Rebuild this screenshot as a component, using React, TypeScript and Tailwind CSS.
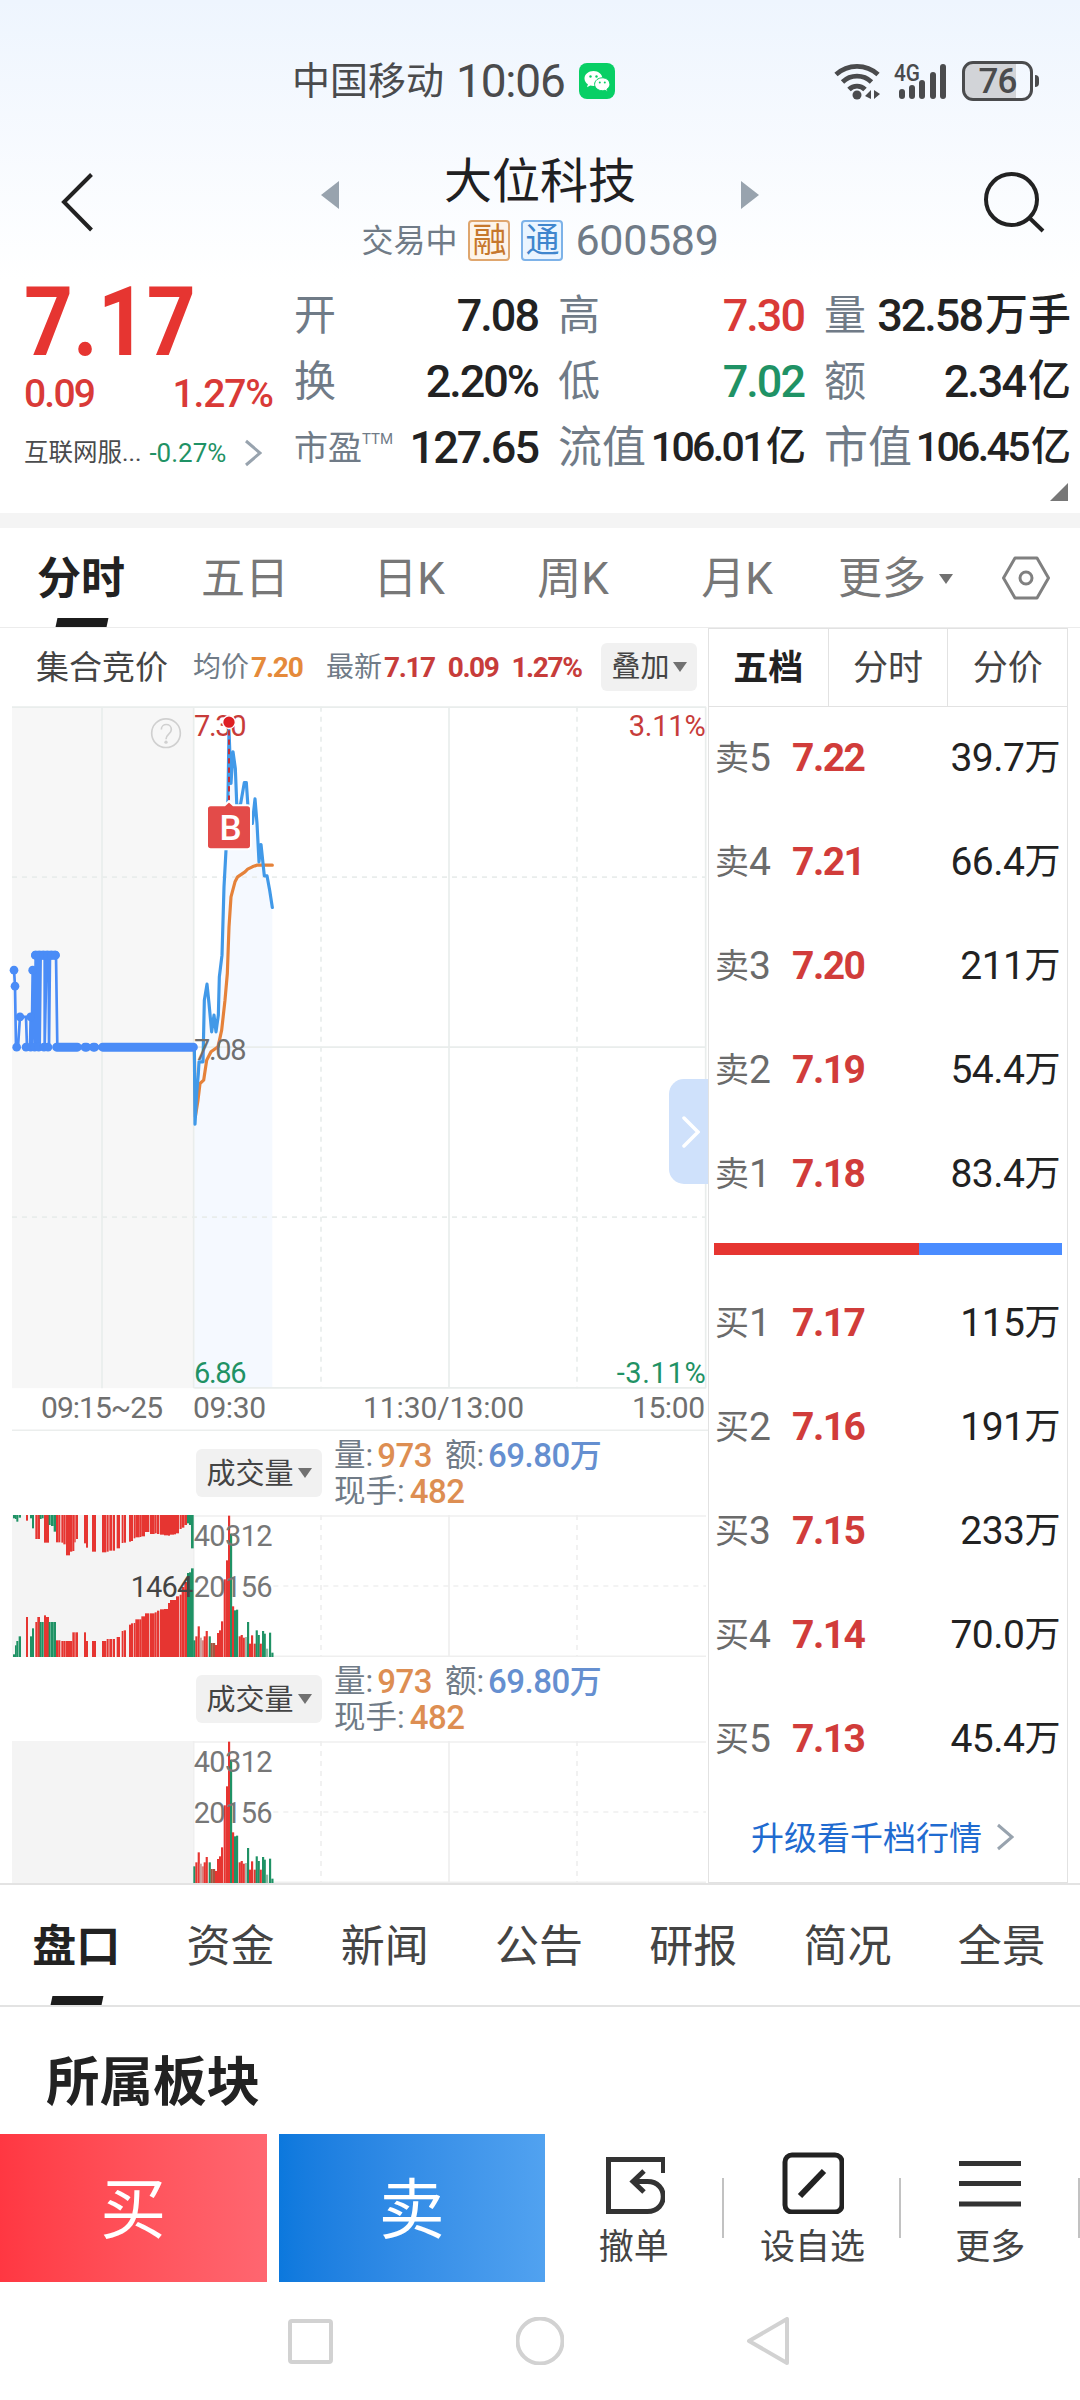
import type { ReactNode } from 'react';
import clsx from 'clsx';

const RED = '#e63531';
const GREEN = '#1f9265';

interface Quote {
  label: ReactNode;
  value: string;
  unit?: string;
  tone?: string;
  compact?: boolean;
}

const quotes: Quote[] = [
  { label: '开', value: '7.08' },
  { label: '高', value: '7.30', tone: 'text-[#d93a37]' },
  { label: '量', value: '32.58', unit: '万手' },
  { label: '换', value: '2.20%' },
  { label: '低', value: '7.02', tone: 'text-[#1f9265]' },
  { label: '额', value: '2.34', unit: '亿' },
  {
    label: (
      <span className="flex items-start text-[34px] leading-[38px]">
        市盈<span className="text-[15px] leading-[20px]">TTM</span>
      </span>
    ),
    value: '127.65',
  },
  { label: '流值', value: '106.01', unit: '亿', compact: true },
  { label: '市值', value: '106.45', unit: '亿', compact: true },
];

const sells = [
  ['卖', '5', '7.22', '39.7'],
  ['卖', '4', '7.21', '66.4'],
  ['卖', '3', '7.20', '211'],
  ['卖', '2', '7.19', '54.4'],
  ['卖', '1', '7.18', '83.4'],
];

const buys = [
  ['买', '1', '7.17', '115'],
  ['买', '2', '7.16', '191'],
  ['买', '3', '7.15', '233'],
  ['买', '4', '7.14', '70.0'],
  ['买', '5', '7.13', '45.4'],
];

// Chart units are a third of a pixel.
const PRICE_LINE =
  '583,1041 585,1272 590,1180 595,1120 597,1085 609,1085 613,900 621,852 627,910 635,995 642,945 648,995 655,945 658,830 666,765 672,560 678,450 684,290 687,90 693,250 699,155 706,205 711,330 722,310 733,247 739,247 744,320 757,370 765,296 771,370 777,485 783,433 793,527 801,527 809,570 817,622';
const AVG_LINE =
  '583,1041 586,1250 594,1200 600,1150 611,1140 620,1080 633,1055 654,1040 665,990 675,900 682,820 687,680 693,590 705,545 713,530 735,515 743,507 757,500 770,495 817,495';
const AUCTION_LINE =
  '42,808 45,858 48,1041 54,1041 60,950 78,950 81,1041 90,1041 92,950 95,1041 98,810 104,1041 107,765 111,1041 115,765 119,1041 122,765 134,765 134,1041 140,765 146,765 147,1041 150,765 168,765 172,1041 583,1041';
const AUCTION_DOTS = [
  [42, 810], [45, 858], [60, 950], [92, 950], [98, 810], [106, 765], [118, 765], [130, 765],
  [142, 765], [154, 765], [166, 765], [50, 1041], [78, 1041], [92, 1041], [104, 1041],
  [116, 1041], [132, 1041], [144, 1041],
];

type Bar = [x: number, height: number, color: string];

const tradeBars: Bar[] = [
  [583, 50, GREEN], [589, 62, RED], [596, 92, RED], [602, 58, '#c9a2a0'], [608, 50, '#d98480'],
  [614, 62, RED], [620, 78, RED], [629, 62, GREEN], [635, 42, '#a4553f'], [642, 42, '#a4553f'],
  [648, 36, RED], [654, 72, RED], [660, 80, RED], [666, 107, RED], [674, 233, RED],
  [681, 290, RED], [687, 424, RED], [693, 370, GREEN], [699, 152, RED], [705, 140, GREEN],
  [711, 142, GREEN], [719, 62, RED], [725, 66, RED], [731, 58, RED], [738, 60, '#a9b9ae'],
  [744, 105, GREEN], [750, 40, RED], [756, 65, RED], [764, 40, RED], [770, 80, GREEN],
  [776, 66, GREEN], [782, 40, RED], [789, 78, GREEN], [794, 70, GREEN], [801, 25, '#8fb8a2'],
  [810, 73, GREEN], [817, 13, GREEN],
];

// x, width, depth from the top, height from the bottom, colour
type AuctionBar = [number, number, number, number, string];

const auctionBars: AuctionBar[] = [
  [39, 6, 10, 8, GREEN], [45, 5, 12, 35, GREEN], [49, 6, 20, 48, GREEN], [56, 7, 8, 62, GREEN],
  [78, 6, 17, 120, RED], [90, 6, 10, 62, GREEN], [96, 6, 40, 86, GREEN], [106, 6, 72, 105, RED],
  [112, 8, 72, 120, RED], [119, 6, 12, 105, GREEN], [125, 6, 10, 105, GREEN], [132, 6, 83, 125, RED],
  [138, 9, 83, 120, RED], [146, 6, 30, 105, GREEN], [153, 8, 33, 105, GREEN], [161, 7, 50, 105, GREEN],
  [168, 7, 82, 50, RED], [175, 6, 82, 50, RED], [184, 6, 83, 48, RED], [190, 7, 88, 48, RED],
  [198, 12, 121, 48, RED], [210, 7, 110, 48, RED], [217, 6, 108, 74, RED], [223, 4, 82, 74, RED],
  [228, 6, 72, 74, RED], [252, 6, 85, 74, RED], [258, 6, 98, 48, RED], [276, 12, 110, 48, RED],
  [306, 13, 112, 48, RED], [320, 6, 110, 54, RED], [328, 8, 107, 54, RED], [338, 7, 107, 54, RED],
  [350, 10, 100, 60, RED], [365, 5, 84, 78, RED], [371, 7, 83, 80, RED], [387, 6, 80, 97, RED],
  [393, 6, 78, 101, RED], [401, 5, 70, 102, RED], [406, 13, 67, 113, RED], [419, 5, 66, 113, RED],
  [424, 11, 64, 122, RED], [435, 13, 51, 131, RED], [450, 14, 57, 131, RED], [464, 6, 55, 134, RED],
  [471, 7, 57, 139, RED], [480, 12, 59, 143, RED], [492, 12, 61, 144, RED], [504, 6, 62, 162, RED],
  [510, 12, 59, 171, RED], [522, 6, 58, 171, RED], [528, 9, 55, 182, RED], [539, 6, 42, 187, RED],
  [545, 8, 38, 210, RED], [553, 8, 30, 225, RED], [561, 6, 25, 252, GREEN], [567, 6, 30, 254, GREEN],
  [573, 8, 100, 266, GREEN],
];

function Caret({ className }: { className?: string }) {
  return (
    <svg viewBox="0 0 14 10" className={clsx('h-[10px] w-[14px] shrink-0', className)}>
      <path d="M0 0h14L7 10z" fill="#717171" />
    </svg>
  );
}

function ChevronRight({ className }: { className?: string }) {
  return (
    <svg viewBox="0 0 18 28" fill="none" strokeWidth={3} className={clsx('h-7 w-[18px] shrink-0', className)}>
      <path d="M2 2l14 12L2 26" stroke="currentColor" />
    </svg>
  );
}

function StatusBar() {
  return (
    <div className="flex h-[110px] items-center pt-[52px] pr-[41px] pl-[292px] text-[#4a4b4d]">
      <span className="text-[38px] leading-none">中国移动</span>
      <span className="ml-[12px] text-[46px] leading-none tracking-[-1.2px]">10:06</span>
      <svg viewBox="0 0 36 36" className="ml-[14px] h-9 w-9">
        <rect width="36" height="36" rx="8" fill="#08cf65" />
        <g fill="#fff">
          <path d="M14.500 8c-5 0-9 3.300-9 7.500 0 2.400 1.300 4.400 3.400 5.800l-.9 2.900 3.300-1.700c1 .3 2 .4 3.200.4 4.900 0 8.900-3.200 8.900-7.400S19.400 8 14.500 8z" />
          <path
            d="M23.300 14.800c-4.200 0-7.700 2.900-7.700 6.500s3.500 6.400 7.700 6.400c.9 0 1.800-.1 2.600-.4l2.700 1.500-.7-2.500c1.800-1.200 3-2.900 3-5 0-3.600-3.400-6.500-7.600-6.500z"
            stroke="#08cf65"
          />
        </g>
        <g fill="#08cf65">
          <circle cx="11.500" cy="13.500" r="1.200" />
          <circle cx="17.500" cy="13.500" r="1.200" />
          <circle cx="20.800" cy="19.500" r="1" />
          <circle cx="25.800" cy="19.500" r="1" />
        </g>
      </svg>
      <svg viewBox="0 0 48 38" fill="none" stroke="#4a4b4d" strokeWidth={4.800} className="ml-auto h-[38px] w-12">
        <path d="M2 12.500a31 31 0 0 1 42 0M8.500 20a21 21 0 0 1 29 0M15 27.500a11 11 0 0 1 16 0" />
        <circle cx="23" cy="33" r="4.500" fill="#4a4b4d" stroke="none" />
        <path d="M37 28v9l-6-3zM40 28v9l6-5z" fill="#4a4b4d" stroke="none" />
      </svg>
      <svg viewBox="0 0 54 38" className="ml-[12px] h-[38px] w-[54px] overflow-visible" fill="#4a4b4d">
        <text x="0" y="19" fontSize="24" fontWeight="500" textLength="26" lengthAdjust="spacingAndGlyphs">
          4G
        </text>
        <rect x="5" y="27" width="6" height="10" rx="3" />
        <rect x="15" y="23" width="6" height="14" rx="3" />
        <rect x="25" y="18" width="6" height="19" rx="3" />
        <rect x="36" y="10" width="6" height="27" rx="3" />
        <rect x="46" y="2" width="6" height="35" rx="3" />
      </svg>
      <div className="ml-[14px] flex h-10 w-[71px] items-center justify-center rounded-[11px] border-3 border-[#4a4b4d] bg-linear-to-r from-[#d2d4d8] from-78% to-transparent to-78% text-[35px] leading-none font-medium tracking-[-1px]">
        76
      </div>
      <div className="ml-[2px] h-3 w-1 rounded-r-full bg-[#4a4b4d]" />
    </div>
  );
}

function TitleBar() {
  return (
    <div className="flex h-[170px] items-center">
      <div className="w-[321px] pl-[60px]">
        <svg viewBox="0 0 34 60" fill="none" className="mt-[14px] h-[60px] w-[34px]">
          <path d="M31.500 2.500L4 30l27.500 28" stroke="#222" strokeWidth="4" />
        </svg>
      </div>
      <svg viewBox="0 0 18 28" className="h-7 w-[18px]">
        <path d="M18 0v28L0 14z" fill="#98a3ae" />
      </svg>
      <div className="flex flex-1 flex-col items-center self-start pt-[48px]">
        <h1 className="text-[48px] leading-[48px] text-[#1f2022]">大位科技</h1>
        <div className="mt-[14px] flex h-10 items-center text-[32px] leading-none whitespace-nowrap text-[#707b87]">
          <span className="pt-[2px]">交易中</span>
          <span className="ml-[11px] flex h-[41px] w-[42px] items-center justify-center rounded-[4px] border-2 border-[#dfa66e] bg-[#fdf4ea] text-[34px] text-[#c6772c]">
            融
          </span>
          <span className="ml-[11px] flex h-[41px] w-[42px] items-center justify-center rounded-[4px] border-2 border-[#7db2e8] bg-[#eaf5ff] text-[34px] text-[#3f86cd]">
            通
          </span>
          <span className="ml-[12px] text-[43px] tracking-[-0.3px]">600589</span>
        </div>
      </div>
      <svg viewBox="0 0 18 28" className="h-7 w-[18px]">
        <path d="M0 0v28l18-14z" fill="#98a3ae" />
      </svg>
      <div className="flex w-[321px] justify-end pr-[33px]">
        <svg viewBox="0 0 64 62" fill="none" stroke="#222" strokeWidth="4" className="mt-[14px] h-[62px] w-16">
          <circle cx="28.500" cy="28.500" r="25.500" />
          <path d="M46 46.500l14 13.500" />
        </svg>
      </div>
    </div>
  );
}

function QuotePanel() {
  return (
    <div className="relative flex h-[233px] pt-[2px]">
      <div className="w-[294px] pl-6 text-[#d93a37]">
        <div className="origin-left scale-x-[0.89] pt-[3px] text-[96px] leading-[75px] font-bold text-[#e63531]">7.17</div>
        <div className="mt-[15px] flex w-[248px] justify-between text-[39px] leading-[38px] font-medium">
          <span className="tracking-[-1.8px]">0.09</span>
          <span className="-mr-[1px] tracking-[-1.100px]">1.27%</span>
        </div>
        <div className="mt-[26px] flex items-center leading-[28px] whitespace-nowrap">
          <span className="text-[24.500px] text-[#4a4b4d]">互联网服...</span>
          <span className="ml-[8px] text-[26px] text-[#1f9265]">-0.27%</span>
          <ChevronRight className="ml-[18px] text-[#98a3ae]" />
        </div>
      </div>
      <div className="grid h-[198px] grid-cols-[244px_246px_245px] grid-rows-3 gap-x-5 font-medium text-[#222]">
        {quotes.map((q, i) => (
          <div key={i} className="flex items-center justify-between leading-none whitespace-nowrap">
            <span className={clsx('pt-[2px] font-normal text-[#707b87]', q.compact ? 'text-[44px]' : 'text-[42px]')}>
              {q.label}
            </span>
            <span
              className={clsx(
                'flex items-center',
                q.tone,
                q.compact ? 'text-[41px] tracking-[-2.600px]' : 'text-[45px] tracking-[-2px]',
              )}
            >
              {q.value}
              {q.unit && (
                <span className={clsx('-mr-[2px] ml-[3px] tracking-normal', q.compact ? 'text-[40px]' : 'text-[43px]')}>
                  {q.unit}
                </span>
              )}
            </span>
          </div>
        ))}
      </div>
      <svg viewBox="0 0 18 18" className="absolute right-[12px] bottom-[12px] h-[18px] w-[18px]">
        <path d="M18 0v18H0z" fill="#777" />
      </svg>
    </div>
  );
}

function Underline() {
  return <span className="absolute bottom-0 left-1/2 h-[9px] w-[51px] -translate-x-1/2 -skew-x-12 bg-[#1c1c1c]" />;
}

function PeriodTabs() {
  return (
    <div className="flex h-[100px] items-center border-b border-[#ececec] text-[44px] leading-none text-[#777]">
      {['分时', '五日', '日K', '周K', '月K'].map((tab, i) => (
        <div
          key={tab}
          className={clsx('relative flex h-full w-[164px] items-center justify-center', i === 0 && 'font-bold text-[#222]')}
        >
          <span className="-ml-[2px] pt-[3px]">{tab}</span>
          {i === 0 && <Underline />}
        </div>
      ))}
      <div className="flex w-[182px] items-center pt-[2px] pl-[18px]">
        更多
        <Caret className="ml-[13px]" />
      </div>
      <svg viewBox="0 0 48 44" fill="none" stroke="#808080" strokeWidth="3" className="h-11 w-12">
        <path d="M13 2h22l11.500 20L35 42H13L1.500 22z" strokeLinejoin="round" />
        <circle cx="24" cy="22" r="6" />
      </svg>
    </div>
  );
}

function InfoRow() {
  return (
    <div className="flex h-[78px] items-center text-[28px] leading-none whitespace-nowrap text-[#707b87]">
      <span className="ml-9 w-[157px] text-[33px] text-[#444]">集合竞价</span>
      <span className="w-[133px] pt-[2px]">
        均价<b className="ml-[2px] tracking-[-1.200px] text-[#e58a3a]">7.20</b>
      </span>
      <span className="flex items-center pt-[2px]">
        最新
        <b className="ml-[2px] flex gap-[13px] tracking-[-1.400px] text-[#c73c3a]">
          <span>7.17</span>
          <span>0.09</span>
          <span>1.27%</span>
        </b>
      </span>
      <span className="mr-[11px] ml-auto flex h-12 w-24 items-center justify-center gap-[3px] rounded-[6px] bg-[#f1f1f1] text-[29px] text-[#444]">
        叠加
        <Caret />
      </span>
    </div>
  );
}

function PriceChart() {
  return (
    <div className="relative">
      <svg viewBox="0 18 2124 2048" className="block h-[683px] w-[708px]">
        <rect x="36" y="20" width="545" height="2044" fill="#f7f7f7" />
        <polygon points={`583,2064 ${PRICE_LINE} 817,2064`} fill="#f5f9ff" />
        <g stroke="#e9edec" strokeWidth="5">
          <path d="M36 21H2118M583 1041H2118M583 2063H2118M306 20V2064M581 20V2064M1347 20V2064M2117 20V2064" fill="none" />
          <path d="M36 531H2118M36 1551H2118M963 20V2064M1731 20V2064" strokeDasharray="15 15" fill="none" />
        </g>
        <g fill="none" stroke="#d0d0d0" strokeWidth="5">
          <circle cx="498" cy="99" r="43" />
          <path d="M484 88c0-20 30-20 30 0 0 14-16 14-16 29" />
        </g>
        <circle cx="498" cy="126" r="5" fill="#d0d0d0" />
        <g fontSize="87" fill="#6f6f6f">
          <text x="582" y="107" textLength="158" fill="#c73c3a">7.30</text>
          <text x="1886" y="107" textLength="231" fill="#c73c3a">3.11%</text>
          <text x="582" y="2050" textLength="158" fill={GREEN}>6.86</text>
          <text x="1850" y="2050" textLength="267" fill={GREEN}>-3.11%</text>
        </g>
        <g fill="none" strokeWidth="9.500" strokeLinejoin="round" strokeLinecap="round">
          <polyline points={AVG_LINE} stroke="#e5823a" />
          <polyline points={PRICE_LINE} stroke="#4199e8" />
        </g>
        <polyline points={AUCTION_LINE} fill="none" stroke="#4a8cf7" strokeWidth="8" />
        <path
          d="M107 765H166M170 1041H232M255 1041H260M280 1041H284M308 1041H580"
          stroke="#4a8cf7"
          strokeWidth="27"
          strokeLinecap="round"
        />
        {AUCTION_DOTS.map(([x, y], i) => (
          <circle key={i} cx={x} cy={y} r="13" fill="#4a8cf7" />
        ))}
        <text x="582" y="1080" fontSize="87" textLength="158" fill="#6f6f6f">7.08</text>
        <path d="M687 90V300" stroke="#c2303a" strokeWidth="6" strokeDasharray="16 12" />
        <circle cx="687" cy="66" r="19" fill="#de1f23" stroke="#fff" strokeWidth="4" />
        <path d="M632 315h42l13-12 13 12h42q11 0 11 11v110q0 11-11 11H632q-11 0-11-11V326q0-11 11-11z" fill="#e34b49" stroke="#fff" strokeWidth="6" />
        <text x="692" y="419" fontSize="105" fontWeight="500" textAnchor="middle" fill="#fff">B</text>
      </svg>
      <div className="absolute top-[373px] right-0 flex h-[105px] w-[39px] items-center justify-center rounded-l-[15px] bg-[#cfe1fb]">
        <svg viewBox="0 0 18 32" fill="none" className="ml-[4px] h-8 w-[18px]">
          <path d="M2 2l14 14L2 30" stroke="#fff" strokeWidth="3.500" strokeLinecap="round" />
        </svg>
      </div>
    </div>
  );
}

function TimeAxis() {
  return (
    <svg viewBox="0 0 708 42" fontSize="30" fill="#6f6f6f" className="block h-[42px] w-[708px]">
      <text x="41" y="29" textLength="122">09:15~25</text>
      <text x="193" y="29" textLength="73">09:30</text>
      <text x="363" y="29" textLength="161">11:30/13:00</text>
      <text x="632" y="29" textLength="73">15:00</text>
      <path d="M12 41.500H708" stroke="#ebeeed" strokeWidth="2" />
    </svg>
  );
}

function VolumeHeader() {
  return (
    <div className="flex h-[84px] items-center pl-[196px] leading-none">
      <div className="flex h-12 w-[126px] items-center justify-center gap-[4px] rounded-[6px] bg-[#f1f1f1] text-[29px] text-[#444]">
        <span className="pt-[2px]">成交量</span>
        <Caret />
      </div>
      <div className="ml-[12px] pt-[2px] text-[31.500px] leading-9 font-medium whitespace-nowrap text-[#707b87]">
        <div className="flex">
          <span className="font-normal">量:</span>
          <span className="ml-[4px] text-[33px] tracking-[-0.500px] text-[#dd8e52]">973</span>
          <span className="ml-[13px] font-normal">额:</span>
          <span className="ml-[4px] flex text-[33px] tracking-[-0.500px] text-[#658fd0]">
            69.80<span className="text-[32px]">万</span>
          </span>
        </div>
        <div className="flex">
          <span className="font-normal">现手:</span>
          <span className="ml-[5px] text-[33px] tracking-[-0.500px] text-[#dd8e52]">482</span>
        </div>
      </div>
    </div>
  );
}

function VolumeChart({ auction }: { auction?: boolean }) {
  return (
    <svg viewBox="0 345 2124 426" className="block h-[142px] w-[708px]" fontSize="87" fill="#777">
      <rect x="36" y="345" width="545" height="426" fill="#f4f4f4" />
      <g stroke="#efefef" strokeWidth="5" fill="none">
        <path d="M580 348H2118M580 769H2118M581 345V770M1347 345V770" />
        <path d="M820 558H2118M963 345V770M1731 345V770" strokeDasharray="15 15" />
      </g>
      {auction &&
        auctionBars.map(([x, w, top, bottom, color]) => (
          <g key={x} fill={color}>
            <rect x={x} y="345" width={w} height={top} />
            <rect x={x} y={771 - bottom} width={w} height={bottom} />
          </g>
        ))}
      {tradeBars.map(([x, h, color]) => (
        <rect key={x} x={x - 3} y={771 - h} width="6.500" height={h} fill={color} />
      ))}
      <text x="581" y="437" textLength="237">40312</text>
      <text x="581" y="590" textLength="237">20156</text>
      {auction && (
        <text x="392" y="590" textLength="188" fill="#444">1464</text>
      )}
    </svg>
  );
}

function OrderRow({ row }: { row: string[] }) {
  const [side, level, price, volume] = row;
  return (
    <div className="flex h-[104px] items-center text-[39px] leading-none text-[#222]">
      <span className="flex w-[77px] items-center text-[#6b6b6b]">
        <span className="text-[34px]">{side}</span>
        {level}
      </span>
      <span className="font-bold tracking-[-1.500px] text-[#d13c3a]">{price}</span>
      <span className="ml-auto flex items-center tracking-[-0.500px]">
        {volume}
        <span className="text-[36px]">万</span>
      </span>
    </div>
  );
}

function OrderBook() {
  return (
    <div className="w-[360px] border border-[#e2e2e2]">
      <div className="flex h-[78px] border-b border-[#e2e2e2] text-[35px] text-[#444]">
        {['五档', '分时', '分价'].map((tab, i) => (
          <div
            key={tab}
            className={clsx(
              'flex flex-1 items-center justify-center pt-[3px]',
              i === 0 ? 'font-bold text-[#222]' : 'border-l border-[#e2e2e2]',
            )}
          >
            {tab}
          </div>
        ))}
      </div>
      <div className="-mt-[1px] pr-[7px] pl-[6px]">
        {sells.map((row) => (
          <OrderRow key={row[2]} row={row} />
        ))}
      </div>
      <div className="mx-[5px] mt-[17px] mb-4 flex h-3">
        <div className="w-[205px] bg-[#e63531]" />
        <div className="flex-1 bg-[#4a8cff]" />
      </div>
      <div className="pr-[7px] pl-[6px]">
        {buys.map((row) => (
          <OrderRow key={row[2]} row={row} />
        ))}
      </div>
      <div className="flex h-[92px] items-center pl-[42px] text-[33px] leading-none text-[#1f6bd0]">
        <span className="pt-[3px]">升级看千档行情</span>
        <ChevronRight className="ml-[14px] text-[#98a3ae]" />
      </div>
    </div>
  );
}

function SectionTabs() {
  return (
    <div className="flex h-[124px] border-y-2 border-[#e3e3e3] text-[44px] text-[#444]">
      {['盘口', '资金', '新闻', '公告', '研报', '简况', '全景'].map((tab, i) => (
        <div
          key={tab}
          className={clsx('relative flex flex-1 items-center justify-center', i === 0 && 'font-bold text-[#222]')}
        >
          <span className="-ml-[2px] pt-[3px]">{tab}</span>
          {i === 0 && <Underline />}
        </div>
      ))}
    </div>
  );
}

function Action({ label, children }: { label: string; children: ReactNode }) {
  return (
    <div className="flex w-[178px] flex-col items-center pt-[18px] text-[35px] leading-none whitespace-nowrap text-[#444]">
      <svg viewBox="0 0 62 62" fill="none" stroke="#333" strokeWidth="5" className="mb-[16px] h-[62px] w-[62px]">
        {children}
      </svg>
      {label}
    </div>
  );
}

function ActionBar() {
  return (
    <div className="flex h-[148px] overflow-hidden">
      <button className="w-[267px] bg-linear-to-r from-[#ff3742] to-[#ff6670] pt-[6px] text-[66px] leading-none text-white">
        买
      </button>
      <button className="ml-3 w-[267px] bg-linear-to-r from-[#0b78dd] to-[#51a2f0] pt-[6px] text-[66px] leading-none text-white">
        卖
      </button>
      <div className="flex w-[534px]">
        <Action label="撤单">
          <path d="M60.500 21V7.500H5.500v52h39c21 0 21-30 0-30H30M41 19L30 29.500 41 40" />
        </Action>
        <div className="mt-11 -ml-[1px] h-[60px] w-[2px] bg-[#c2c2c2]" />
        <Action label="设自选">
          <rect x="3" y="3" width="57" height="57" rx="7" stroke="#222" />
          <path d="M18 44L42 19" stroke="#222" strokeWidth="6" />
        </Action>
        <div className="mt-11 -ml-[2px] h-[60px] w-[2px] bg-[#c2c2c2]" />
        <Action label="更多">
          <path d="M0 11.500h62M0 31.500h62M0 52h62" />
        </Action>
      </div>
      <div className="mt-11 -ml-[1px] h-[60px] w-[2px] bg-[#c2c2c2]" />
    </div>
  );
}

function NavBar() {
  return (
    <div className="flex h-[118px] items-center justify-center gap-[182px]">
      <svg viewBox="0 0 48 48" fill="none" stroke="#d2d2d2" strokeWidth="4" className="h-12 w-12">
        <rect x="4" y="4" width="41" height="41" rx="2" />
      </svg>
      <svg viewBox="0 0 48 48" fill="none" stroke="#d2d2d2" strokeWidth="4" className="h-12 w-12">
        <circle cx="24" cy="24" r="22.500" />
      </svg>
      <svg viewBox="0 0 48 48" fill="none" stroke="#d2d2d2" strokeWidth="4" className="h-12 w-12">
        <path d="M41 2v44L3 24z" strokeLinejoin="round" />
      </svg>
    </div>
  );
}

export default function App() {
  return (
    <div className="h-[2400px] w-[1080px] overflow-hidden bg-white font-['Roboto','Noto_Sans_CJK_SC',sans-serif]">
      <div className="bg-linear-to-b from-[#eef5fe] to-white to-[280px]">
        <StatusBar />
        <TitleBar />
      </div>
      <QuotePanel />
      <div className="h-[15px] bg-[#f4f4f4]" />
      <PeriodTabs />
      <div className="flex h-[1255px]">
        <div className="w-[708px]">
          <InfoRow />
          <PriceChart />
          <TimeAxis />
          <VolumeHeader />
          <VolumeChart auction />
          <VolumeHeader />
          <VolumeChart />
        </div>
        <OrderBook />
      </div>
      <SectionTabs />
      <h2 className="h-[127px] pt-[12px] pl-[46px] text-[53.500px] leading-[127px] font-bold text-[#222]">所属板块</h2>
      <ActionBar />
      <NavBar />
    </div>
  );
}
